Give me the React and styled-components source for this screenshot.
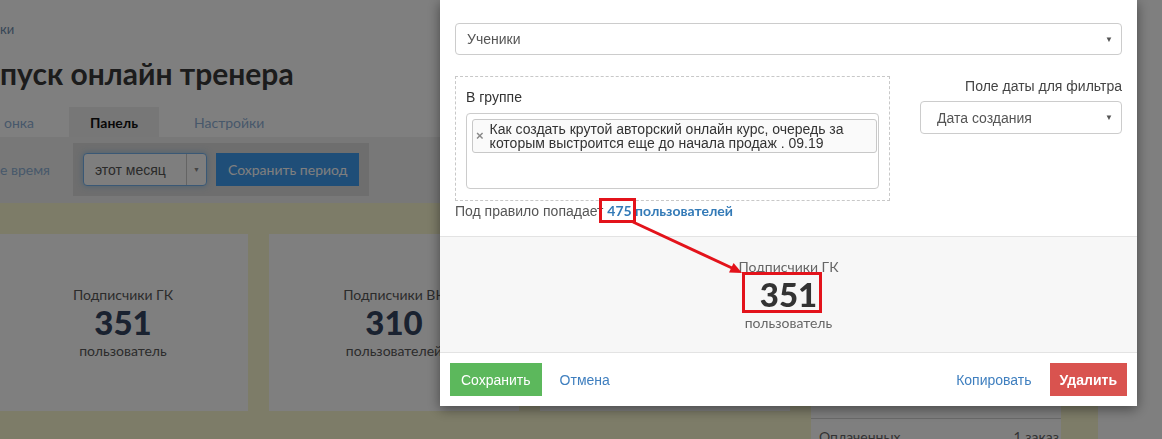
import React from "react";
import styled, { createGlobalStyle } from "styled-components";

const GlobalStyle = createGlobalStyle`
  html, body { margin: 0; padding: 0; }
  body {
    background: #ffffff;
    font-family: Lato, "Open Sans", sans-serif;
    overflow: hidden;
    width: 1162px;
    height: 439px;
  }
  * { box-sizing: border-box; }
`;

/* ---------- background page ---------- */
const Page = styled.div`
  width: 1098px;
  height: 439px;
  display: flex;
  flex-direction: column;
  overflow: hidden;
  & > * { flex-shrink: 0; }
`;

const Breadcrumb = styled.div`
  padding-top: 20px;
  font-size: 13px;
  line-height: 18px;
  color: #6d8cac;
`;

const Title = styled.h1`
  margin: 17px 0 0;
  font-size: 30px;
  line-height: 36px;
  font-weight: 700;
  color: #383838;
  white-space: nowrap;
`;

const Tabs = styled.div`
  margin: 16px 0 0 -17px;
  display: flex;
  gap: 14px;
  height: 30px;
`;

const Tab = styled.div`
  padding: 0 21px;
  display: flex;
  align-items: center;
  font-size: 14px;
  color: ${(p) => (p.$active ? "#111" : "#8fb0d6")};
  font-weight: ${(p) => (p.$active ? 700 : 400)};
  background: ${(p) => (p.$active ? "#eeeeee" : "transparent")};
`;

const FilterStrip = styled.div`
  height: 66px;
  background: #f0f0f0;
  display: flex;
  align-items: flex-start;
  padding-top: 6px;
  gap: 23px;
`;

const PeriodLink = styled.span`
  font-size: 14px;
  color: #8fb0d6;
  line-height: 53px;
`;

const PeriodBox = styled.div`
  background: #dcdcdc;
  padding: 10px;
  display: flex;
  gap: 9px;
`;

const PeriodSelect = styled.div`
  width: 124px;
  height: 33px;
  background: #fdfdfd;
  border: 1px solid #74b0ea;
  border-radius: 4px;
  box-shadow: 0 0 6px rgba(102, 175, 233, 0.6);
  display: flex;
  font-family: "Liberation Sans", Arial, sans-serif;
  font-size: 14px;
  color: #555;
`;

const PeriodValue = styled.span`
  flex: 1;
  padding-left: 11px;
  display: flex;
  align-items: center;
`;

const PeriodArrow = styled.span`
  width: 20px;
  border-left: 1px solid #c8c8c8;
  display: flex;
  align-items: center;
  justify-content: center;
  font-size: 7px;
  color: #888;
`;

const BlueButton = styled.div`
  height: 33px;
  padding: 0 12px;
  background: #3e9cf0;
  color: #fff;
  font-size: 14px;
  display: flex;
  align-items: center;
`;

const StatsArea = styled.div`
  flex: 1 0 auto;
  background: #faf8d0;
  padding: 31px 0 0 0;
  display: grid;
  grid-template-columns: repeat(4, 250px);
  column-gap: 21px;
  margin-left: -2px;
  align-items: start;
`;

const StatCard = styled.div`
  background: #fff;
  height: 177px;
  display: flex;
  flex-direction: column;
  align-items: center;
  justify-content: center;
`;

const StatLabel = styled.div`
  font-size: 14px;
  line-height: 18px;
  color: ${(p) => (p.$muted ? "#666" : "#585858")};
`;

const StatNumber = styled.div`
  font-size: 33px;
  line-height: 36px;
  font-weight: 900;
  color: ${(p) => p.$color || "#344460"};
`;

const StatUnit = styled.div`
  margin-top: 2px;
  font-size: 14px;
  line-height: 18px;
  color: ${(p) => (p.$muted ? "#666" : "#585858")};
`;

const ListCard = styled.div`
  background: #fff;
  display: flex;
  flex-direction: column;
`;

const ListTop = styled.div`
  height: 184px;
`;

const ListRow = styled.div`
  border-top: 1px solid #d4d4d4;
  display: flex;
  justify-content: space-between;
  padding: 9px 2px 12px 8px;
  font-size: 14px;
  line-height: 18px;
  color: #666;
`;

/* ---------- overlay and modal ---------- */
const Overlay = styled.div`
  position: fixed;
  inset: 0;
  background: rgba(0, 0, 0, 0.5);
`;

const Modal = styled.div`
  position: fixed;
  left: 440px;
  top: 0;
  width: 697px;
  background: #fff;
  box-shadow: 0 3px 12px rgba(0, 0, 0, 0.45);
  font-family: "Liberation Sans", Arial, sans-serif;
  font-size: 14px;
  color: #333;
`;

const ModalBody = styled.div`
  padding: 23px 15px 15px;
`;

const Select = styled.div`
  height: ${(p) => p.$h || 32}px;
  border: 1px solid #ccc;
  border-radius: 4px;
  background: #fff;
  display: flex;
  align-items: center;
  justify-content: space-between;
  padding: 0 8px 0 ${(p) => p.$pl || 11}px;
  color: #555;
  font-size: 14px;
`;

const Caret = styled.span`
  font-size: 8px;
  color: #555;
`;

const FilterRow = styled.div`
  margin-top: 21px;
  display: flex;
  justify-content: space-between;
`;

const GroupBox = styled.div`
  width: 435px;
  border: 1px dashed #c8c8c8;
  padding: 10px 10px 11px;
`;

const GroupLabel = styled.div`
  line-height: 20px;
  margin-bottom: 6px;
  color: #333;
`;

const TagInput = styled.div`
  height: 76px;
  border: 1px solid #ccc;
  border-radius: 4px;
  padding: 5px 1px 0 5px;
`;

const Tag = styled.div`
  border: 1px solid #c8c8c8;
  border-radius: 3px;
  background: #fafafa;
  padding: 2px 4px 2px 3px;
  display: flex;
  gap: 6px;
  line-height: 14px;
  color: #333;
`;

const TagRemove = styled.span`
  font-size: 13px;
  font-weight: 700;
  color: #888;
  line-height: 28px;
`;

const DateCol = styled.div`
  width: 202px;
  display: flex;
  flex-direction: column;
  gap: 5px;
`;

const DateLabel = styled.div`
  text-align: right;
  line-height: 20px;
  color: #444;
`;

const CountLine = styled.div`
  line-height: 20px;
  color: #555;
`;

const CountLink = styled.span`
  font-family: Lato, "Open Sans", sans-serif;
  font-weight: 700;
  color: #337ab7;
`;

const Result = styled.div`
  height: 117px;
  background: #f7f7f7;
  border-top: 1px solid #e3e3e3;
  border-bottom: 1px solid #e3e3e3;
  display: flex;
  flex-direction: column;
  align-items: center;
  justify-content: center;
  font-family: Lato, "Open Sans", sans-serif;
`;

const Footer = styled.div`
  padding: 10px 10px 10px 10px;
  display: flex;
  align-items: center;
  gap: 18px;
`;

const Button = styled.div`
  height: 33px;
  padding: 0 ${(p) => (p.$bold ? 10 : 11)}px;
  display: flex;
  align-items: center;
  color: #fff;
  font-weight: ${(p) => (p.$bold ? 700 : 400)};
  background: ${(p) => p.$bg};
`;

const LinkText = styled.span`
  color: #3f7fbf;
  margin-left: ${(p) => (p.$push ? "auto" : "0")};
`;

const Marker = styled.div`
  position: absolute;
  border: 3px solid #e3131b;
  left: ${(p) => p.$x}px;
  top: ${(p) => p.$y}px;
  width: ${(p) => p.$w}px;
  height: ${(p) => p.$h}px;
  pointer-events: none;
`;

const ArrowSvg = styled.svg`
  position: absolute;
  left: 0;
  top: 0;
  pointer-events: none;
`;

export default function App() {
  return (
    <>
      <GlobalStyle />
      <Page>
        <Breadcrumb>ки</Breadcrumb>
        <Title>пуск онлайн тренера</Title>
        <Tabs>
          <Tab>онка</Tab>
          <Tab $active>Панель</Tab>
          <Tab>Настройки</Tab>
        </Tabs>
        <FilterStrip>
          <PeriodLink>е время</PeriodLink>
          <PeriodBox>
            <PeriodSelect>
              <PeriodValue>этот месяц</PeriodValue>
              <PeriodArrow>▼</PeriodArrow>
            </PeriodSelect>
            <BlueButton>Сохранить период</BlueButton>
          </PeriodBox>
        </FilterStrip>
        <StatsArea>
          <StatCard>
            <StatLabel>Подписчики ГК</StatLabel>
            <StatNumber>351</StatNumber>
            <StatUnit>пользователь</StatUnit>
          </StatCard>
          <StatCard>
            <StatLabel>Подписчики ВК</StatLabel>
            <StatNumber>310</StatNumber>
            <StatUnit>пользователей</StatUnit>
          </StatCard>
          <StatCard>
            <StatLabel>Ученики</StatLabel>
            <StatNumber>475</StatNumber>
            <StatUnit>пользователей</StatUnit>
          </StatCard>
          <ListCard>
            <ListTop />
            <ListRow>
              <span>Оплаченных</span>
              <span>1 заказ</span>
            </ListRow>
          </ListCard>
        </StatsArea>
      </Page>

      <Overlay />

      <Modal>
        <ModalBody>
          <Select>
            <span>Ученики</span>
            <Caret>▼</Caret>
          </Select>
          <FilterRow>
            <GroupBox>
              <GroupLabel>В группе</GroupLabel>
              <TagInput>
                <Tag>
                  <TagRemove>×</TagRemove>
                  <span>
                    Как создать крутой авторский онлайн курс, очередь за
                    <br />
                    которым выстроится еще до начала продаж . 09.19
                  </span>
                </Tag>
              </TagInput>
            </GroupBox>
            <DateCol>
              <DateLabel>Поле даты для фильтра</DateLabel>
              <Select $h={33} $pl={16}>
                <span>Дата создания</span>
                <Caret>▼</Caret>
              </Select>
            </DateCol>
          </FilterRow>
          <CountLine>
            Под правило попадает <CountLink>475 пользователей</CountLink>
          </CountLine>
        </ModalBody>

        <Result>
          <StatLabel $muted>Подписчики ГК</StatLabel>
          <StatNumber $color="#333">351</StatNumber>
          <StatUnit $muted>пользователь</StatUnit>
        </Result>

        <Footer>
          <Button $bg="#5cb85c">Сохранить</Button>
          <LinkText>Отмена</LinkText>
          <LinkText $push>Копировать</LinkText>
          <Button $bg="#d9534f" $bold>
            Удалить
          </Button>
        </Footer>

        <Marker $x={159} $y={198} $w={37} $h={25} />
        <Marker $x={302} $y={272} $w={80} $h={41} />
        <ArrowSvg width="697" height="407" viewBox="0 0 697 407">
          <line x1="193" y1="222" x2="292" y2="268" stroke="#e3131b" strokeWidth="3" />
          <polygon points="302,273 289,272.5 293.6,263" fill="#e3131b" />
        </ArrowSvg>
      </Modal>
    </>
  );
}
